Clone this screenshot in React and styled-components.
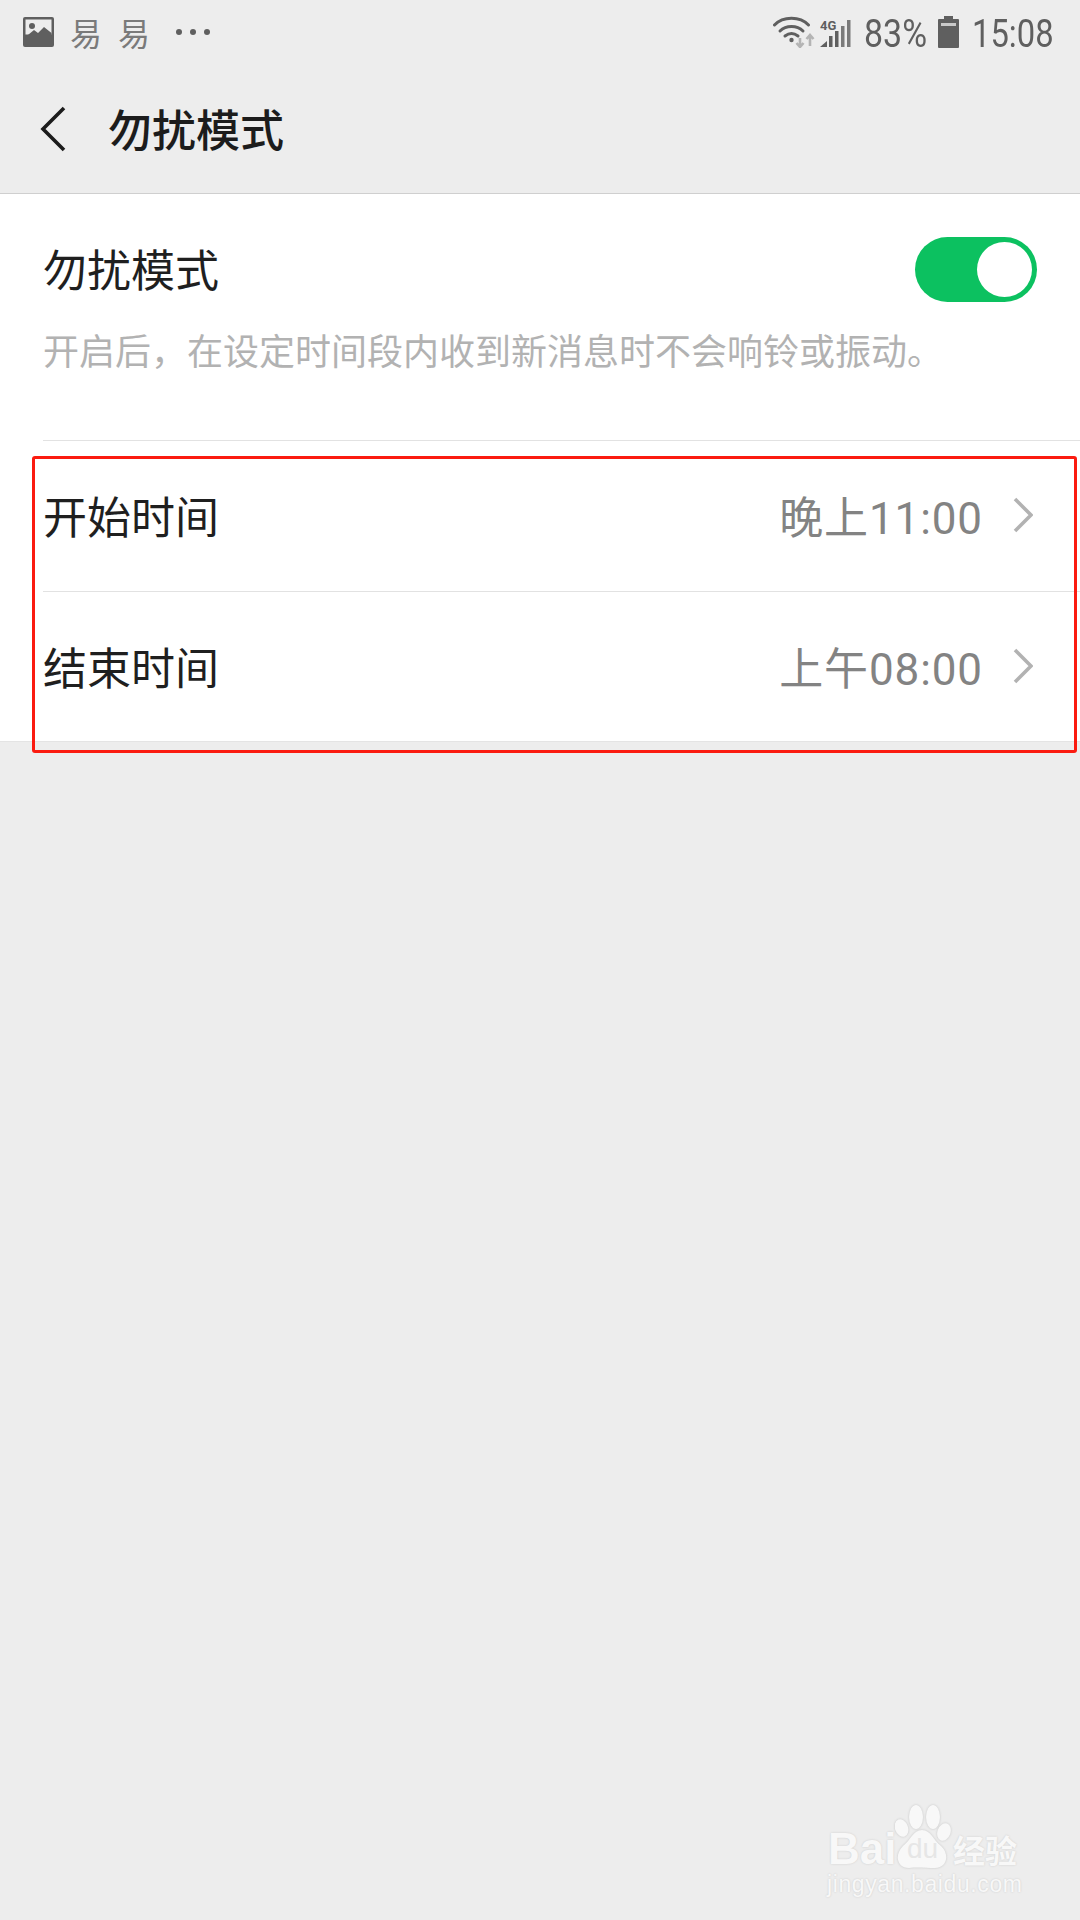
import React from "react";
import styled, { createGlobalStyle } from "styled-components";

const GlobalStyle = createGlobalStyle`
  html, body {
    margin: 0;
    padding: 0;
    background: #ededed;
  }
  body {
    font-family: "Noto Sans CJK SC", "Noto Sans", sans-serif;
  }
`;

const Page = styled.div`
  position: relative;
  width: 1080px;
  height: 1920px;
  overflow: hidden;
  background: #ededed;
`;

const StatusBar = styled.div`
  height: 64px;
  display: flex;
  align-items: center;
  justify-content: space-between;
  padding: 0 26px 0 23px;
  color: #5f5f5f;
`;

const StatusGroup = styled.div`
  display: flex;
  align-items: center;
`;

const NoticeGlyph = styled.span`
  width: 30px;
  margin-left: ${(p) => p.$gap}px;
  font-size: 32px;
  font-weight: 400;
  line-height: 36px;
  color: #7a7a7a;
  text-align: center;
`;

const Dots = styled.div`
  display: flex;
  gap: 8px;
  margin-left: 28px;
`;

const Dot = styled.i`
  width: 6px;
  height: 6px;
  border-radius: 50%;
  background: #5f5f5f;
`;

const StatusText = styled.span`
  font-family: "Roboto", "Liberation Sans", sans-serif;
  font-size: 39px;
  line-height: 40px;
  display: inline-block;
  margin-top: 4px;
  margin-left: ${(p) => p.$gap}px;
  width: ${(p) => p.$width}px;
  transform: scaleX(${(p) => p.$squeeze});
  transform-origin: left center;
  white-space: nowrap;
`;

const Header = styled.header`
  height: 129px;
  display: flex;
  align-items: center;
  padding-left: 40px;
  border-bottom: 1px solid #cfcfcf;
`;

const Title = styled.h1`
  margin: -2px 0 0 42px;
  font-size: 44px;
  font-weight: 500;
  line-height: 60px;
  color: #1c1c1c;
`;

const Panel = styled.section`
  position: relative;
  background: #fff;
  height: 548px;
  padding-left: 43px;
  box-sizing: border-box;
  border-bottom: 1px solid #e4e4e4;
`;

const Intro = styled.div`
  height: 247px;
  box-sizing: border-box;
  padding-top: 43px;
  border-bottom: 1px solid #e2e2e2;
`;

const IntroTop = styled.div`
  display: flex;
  align-items: center;
  justify-content: space-between;
  padding-right: 43px;
  height: 65px;
`;

const RowLabel = styled.span`
  font-size: 44px;
  line-height: 60px;
  color: #1f1f1f;
`;

const IntroLabel = styled(RowLabel)`
  margin-top: -3px;
`;

const Toggle = styled.div`
  width: 122px;
  height: 65px;
  border-radius: 33px;
  background: #0cc160;
  display: flex;
  align-items: center;
  justify-content: flex-end;
  padding-right: 5px;
  box-sizing: border-box;
`;

const Knob = styled.div`
  width: 55px;
  height: 55px;
  border-radius: 50%;
  background: #fff;
`;

const Hint = styled.p`
  margin: 23px 0 0;
  font-size: 36px;
  line-height: 48px;
  color: #b2b2b2;
  white-space: nowrap;
`;

const Row = styled.div`
  height: ${(p) => (p.$last ? 149 : 151)}px;
  display: flex;
  align-items: center;
  justify-content: space-between;
  padding: 0 47px 2px 0;
  box-sizing: border-box;
  border-bottom: ${(p) => (p.$last ? "none" : "1px solid #e2e2e2")};
`;

const RowValue = styled.div`
  display: flex;
  align-items: center;
  gap: 30px;
  font-family: "Roboto", "Noto Sans CJK SC", sans-serif;
  font-size: 44px;
  letter-spacing: 0.9px;
  color: #838383;
`;

const Highlight = styled.div`
  position: absolute;
  left: 32px;
  top: 262px;
  width: 1045px;
  height: 297px;
  box-sizing: border-box;
  border: 3px solid #fb1b10;
  border-radius: 3px;
`;

const Watermark = styled.div`
  position: absolute;
  left: 826px;
  top: 1800px;
  width: 200px;
  height: 100px;
  color: #f8f8f8;
  text-shadow: 0 0 2px #c8c8c8;
`;

const Bai = styled.span`
  position: absolute;
  left: 2px;
  top: 24px;
  font-family: "Liberation Sans", sans-serif;
  font-weight: 700;
  font-size: 44px;
  line-height: 50px;
`;

const Du = styled.span`
  position: absolute;
  left: 81px;
  top: 33px;
  font-family: "Liberation Sans", sans-serif;
  font-size: 28px;
  line-height: 32px;
  color: #e6e6e6;
  text-shadow: none;
`;

const Jing = styled.span`
  position: absolute;
  left: 127px;
  top: 29px;
  font-size: 32px;
  line-height: 40px;
  font-weight: 700;
  white-space: nowrap;
`;

const Domain = styled.span`
  position: absolute;
  left: 1px;
  top: 70px;
  font-family: "Liberation Sans", sans-serif;
  font-size: 23px;
  line-height: 28px;
  letter-spacing: 0.6px;
  white-space: nowrap;
`;

const PawMark = styled.svg`
  position: absolute;
  left: 69px;
  top: 5px;
  filter: drop-shadow(0 0 1px #c4c4c4);
`;

const ImageIcon = () => (
  <svg width="31" height="31" viewBox="0 0 31 31">
    <rect x="0" y="0" width="31" height="30" rx="2" fill="#5f5f5f" />
    <rect x="2.5" y="2.5" width="26" height="15" fill="#ededed" />
    <circle cx="9" cy="9" r="3" fill="#5f5f5f" />
    <path d="M2.5 20 L11 13 L15 16 L21 10 L28.5 16 V22 H2.5 Z" fill="#5f5f5f" />
  </svg>
);

const WifiIcon = () => (
  <svg width="42" height="32" viewBox="0 0 42 32">
    <g fill="none" stroke="#5f5f5f" strokeWidth="3" strokeLinecap="round">
      <path d="M1.5 9 C10 0 27 0 35.5 9" />
      <path d="M7 15 C13 9 24 9 30 15" />
      <path d="M12 20 C16 17 21 17 25 20" />
    </g>
    <circle cx="18.5" cy="24" r="2.2" fill="#5f5f5f" />
    <path d="M27 22 V31 M23.5 27 L27 31 L30.5 27" fill="none" stroke="#b4b4b4" strokeWidth="2.6" />
    <path d="M37 30 V19 M33.5 23 L37 19 L40.5 23" fill="none" stroke="#b4b4b4" strokeWidth="2.6" />
  </svg>
);

const SignalIcon = () => (
  <svg width="32" height="30" viewBox="0 0 32 30" style={{ marginLeft: 5, marginTop: 4 }}>
    <text x="0" y="11" fontFamily="Roboto, sans-serif" fontWeight="700" fontSize="13" fill="#5f5f5f">
      4G
    </text>
    <path d="M0 28 L7 22 V28 Z" fill="#5f5f5f" />
    <rect x="9" y="17" width="3.5" height="11" fill="#5f5f5f" />
    <rect x="15" y="12" width="3.5" height="16" fill="#5f5f5f" />
    <rect x="21" y="7" width="3.5" height="21" fill="#7a7a7a" />
    <rect x="27" y="1" width="3.5" height="27" fill="#7a7a7a" />
  </svg>
);

const BatteryIcon = () => (
  <svg width="21" height="32" viewBox="0 0 21 32" style={{ marginLeft: 13 }}>
    <rect x="6" y="0" width="9" height="4" fill="#5f5f5f" />
    <rect x="0" y="3" width="21" height="29" rx="1" fill="#5f5f5f" />
    <rect x="3" y="7" width="15" height="3" fill="#c9c9c9" />
  </svg>
);

const BackIcon = () => (
  <svg width="26" height="46" viewBox="0 0 26 46">
    <path d="M24 2 L3 23 L24 44" fill="none" stroke="#1c1c1c" strokeWidth="3.6" />
  </svg>
);

const ChevronIcon = () => (
  <svg width="20" height="36" viewBox="0 0 20 36">
    <path d="M2 2 L18 18 L2 34" fill="none" stroke="#b2b2b2" strokeWidth="3.6" />
  </svg>
);

const PawIcon = () => (
  <PawMark width="58" height="66" viewBox="0 0 58 66">
    <g fill="#f8f8f8">
      <ellipse cx="21" cy="12" rx="7" ry="12" />
      <ellipse cx="38" cy="12" rx="7" ry="12" />
      <ellipse cx="6.5" cy="23" rx="6.5" ry="9" transform="rotate(-20 6.5 23)" />
      <ellipse cx="49" cy="27" rx="6.5" ry="9" transform="rotate(20 49 27)" />
      <path d="M27 25 C36 25 38 35 46 41 C55 49 52 63 40 63 C32 63 22 62 14 63 C2 63 -1 50 8 41 C16 35 18 25 27 25 Z" />
    </g>
  </PawMark>
);

const App = () => {
  return (
    <Page>
      <GlobalStyle />
      <StatusBar>
        <StatusGroup>
          <ImageIcon />
          <NoticeGlyph $gap={16}>易</NoticeGlyph>
          <NoticeGlyph $gap={18}>易</NoticeGlyph>
          <Dots>
            <Dot />
            <Dot />
            <Dot />
          </Dots>
        </StatusGroup>
        <StatusGroup>
          <WifiIcon />
          <SignalIcon />
          <StatusText $width={61} $gap={12} $squeeze={0.87}>
            83%
          </StatusText>
          <BatteryIcon />
          <StatusText $width={82} $gap={13} $squeeze={0.84}>
            15:08
          </StatusText>
        </StatusGroup>
      </StatusBar>
      <Header>
        <BackIcon />
        <Title>勿扰模式</Title>
      </Header>
      <Panel>
        <Intro>
          <IntroTop>
            <IntroLabel>勿扰模式</IntroLabel>
            <Toggle>
              <Knob />
            </Toggle>
          </IntroTop>
          <Hint>开启后，在设定时间段内收到新消息时不会响铃或振动。</Hint>
        </Intro>
        <Row>
          <RowLabel>开始时间</RowLabel>
          <RowValue>
            晚上11:00
            <ChevronIcon />
          </RowValue>
        </Row>
        <Row $last>
          <RowLabel>结束时间</RowLabel>
          <RowValue>
            上午08:00
            <ChevronIcon />
          </RowValue>
        </Row>
        <Highlight />
      </Panel>
      <Watermark>
        <PawIcon />
        <Bai>Bai</Bai>
        <Du>du</Du>
        <Jing>经验</Jing>
        <Domain>jingyan.baidu.com</Domain>
      </Watermark>
    </Page>
  );
};

export default App;
